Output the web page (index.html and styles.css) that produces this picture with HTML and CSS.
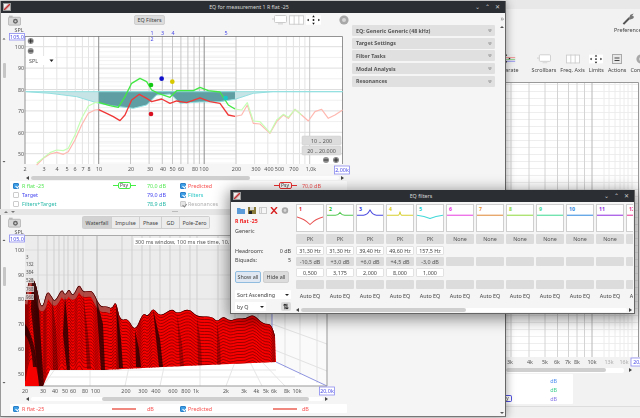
FILE: index.html
```html
<!DOCTYPE html>
<html>
<head>
  <title>EQ for measurement 1 R flat -25</title>
  <link rel="stylesheet" href="styles.css">
</head>
<body>
  <svg class="defs" width="0" height="0">
    <defs>
      <symbol id="camera" viewBox="0 0 14 11">
        <rect x="0.5" y="2" width="13" height="8.5" rx="1" fill="#d8d8d8" stroke="#999" stroke-width=".6"/>
        <rect x="1" y="0.3" width="4" height="2" fill="#bbb"/>
        <circle cx="8" cy="6.3" r="2.6" fill="#666"/>
        <circle cx="8" cy="6.3" r="1.2" fill="#ccc"/>
      </symbol>
      <symbol id="monitor" viewBox="0 0 15 10">
        <rect x="2.5" y="0.5" width="12" height="7" rx="1" fill="#fff" stroke="#ccc"/>
        <rect x="6" y="8" width="5" height="1.6" fill="#ddd"/>
        <path d="M0 4H2" stroke="#ccc"/>
      </symbol>
      <symbol id="bars" viewBox="0 0 16 10">
        <rect x="0.5" y="0.5" width="15" height="9" fill="#fff" stroke="#ccc"/>
        <path d="M5.5 0V10M10.5 0V10" stroke="#ccc"/>
      </symbol>
      <symbol id="limits" viewBox="0 0 16 10">
        <rect width="16" height="10" fill="#fff"/>
        <path d="M8 0L6.6 2H9.4ZM8 10L6.6 8H9.4ZM1 5L3 3.6V6.4ZM15 5L13 3.6V6.4Z" fill="#111"/>
        <circle cx="8" cy="5" r="1" fill="#111"/>
      </symbol>
      <symbol id="gear" viewBox="0 0 10 10">
        <circle cx="5" cy="5" r="4.6" fill="#a8a8a8"/>
        <circle cx="5" cy="5" r="2" fill="#d6d6d6"/>
      </symbol>
      <pattern id="dense-h" patternUnits="userSpaceOnUse" width="10" height="4.28">
        <path d="M0 .5H10" stroke="#ededed" stroke-width=".8"/>
      </pattern>
      <pattern id="back-h" patternUnits="userSpaceOnUse" width="10" height="7">
        <path d="M0 .5H10" stroke="#eeeeee" stroke-width="1"/>
      </pattern>
    </defs>
  </svg>

  <div class="win win-back">
    <div class="back-strip"></div>
    <div class="back-tool-top">
      <div class="back-pref">
        <svg class="wrench" viewBox="0 0 14 14"><path d="M1.5 12.5L8 6" stroke="#555" stroke-width="2.2"/><path d="M7 7L9 2.5L12.5 1L11 3.5L13 4.5L12 6.5L9 7.5Z" fill="#777"/></svg>
        <span>Preferences</span>
      </div>
    </div>
    <div class="back-tools">
      <div class="back-tool first"><svg class="back-icon sep" viewBox="0 0 18 11"><rect width="18" height="11" fill="#eee"/><path d="M0 4H18" stroke="#e88"/><path d="M0 6H18" stroke="#8c8"/><path d="M0 8H18" stroke="#88e"/><path d="M8 0L6.8 2H9.200ZM8 10L6.800 8H9.200ZM3 5L5 4V6ZM13 5L11 4V6Z" fill="#111"/></svg><span>Separate</span></div>
      <div class="back-tool"><svg class="back-icon"><use href="#monitor"/></svg><span>Scrollbars</span></div>
      <div class="back-tool"><svg class="back-icon"><use href="#bars"/></svg><span>Freq. Axis</span></div>
      <div class="back-tool"><svg class="back-icon"><use href="#limits"/></svg><span>Limits</span></div>
      <div class="back-tool"><svg class="back-icon" viewBox="0 0 10 10"><rect x=".5" y=".5" width="9" height="9" fill="#e8e8e8" stroke="#aaa"/><path d="M2.500 4H7.500M2.500 6.500H7.500" stroke="#444"/></svg><span>Actions</span></div>
      <div class="back-tool"><svg class="back-icon"><use href="#gear"/></svg><span>Controls</span></div>
    </div>
    <svg class="back-plot" viewBox="506 82 134 285" width="134" height="285">
      <rect x="506" y="82" width="132" height="275" fill="#fff"/>
      <rect x="506" y="82" width="132" height="275" fill="url(#back-h)"/>
      <path d="M511 82V357M529 82V357M545 82V357M557.500 82V357M568.500 82V357M577 82V357M584.500 82V357" stroke="#d4d4d4" stroke-width="1" fill="none"/>
      <path d="M592 82V357" stroke="#b8b8b8"/>
      <path d="M604 82V357M609 82V357M615 82V357M620 82V357M624 82V357M628 82V357M632 82V357" stroke="#ececec"/>
      <path d="M506 82.500H638.500V357" stroke="#999" fill="none"/>
      <text class="ax" x="510" y="364">3k</text><text class="ax" x="530" y="364">4k</text>
      <text class="ax" x="545" y="364">5k</text><text class="ax" x="557" y="364">6k</text>
      <text class="ax" x="568" y="364">7k</text><text class="ax" x="577" y="364">8k</text>
      <text class="ax" x="592" y="364">10k</text><text class="ax dim" x="609" y="364">13k</text>
      <text class="ax dim" x="624" y="364">16k</text>
      <rect class="limit-box" x="631" y="358" width="12" height="8"/>
      <text class="ax blue-ax" x="637" y="364">20,</text>
    </svg>
    <div class="back-scroll"><div class="back-scroll-thumb"></div><span class="back-arrow"></span></div>
    <div class="back-legend">
      <span class="db-blue">dB</span><span class="db-mint">dB</span><span class="db-violet">dB</span>
      <span class="back-psy">y</span>
    </div>
    <div class="back-foot"></div>
  </div>

  <div class="win win-main">
    <div class="titlebar">
      <span class="app-icon"></span>
      <span class="title-text main-title">EQ for measurement 1 R flat -25</span>
      <span class="wm-btn">&#8964;</span><span class="wm-btn">&#8963;</span><span class="wm-btn">&#10005;</span>
    </div>
    <div class="main-body">
      <div class="plots">
        <div class="toolbar top-toolbar">
          <svg class="cam"><use href="#camera"/></svg>
          <button class="btn eq-btn">EQ Filters</button>
          <svg class="tool-icon monitor"><use href="#monitor"/></svg>
          <svg class="tool-icon"><use href="#bars"/></svg>
          <svg class="tool-icon"><use href="#limits"/></svg>
          <svg class="tool-gear"><use href="#gear"/></svg>
        </div>

        <svg class="plot-svg" viewBox="0 27 350 148" width="350" height="148">
          <rect x="25" y="36" width="318" height="128" fill="#fff"/>
          <rect x="99" y="36" width="137" height="128" fill="url(#dense-h)"/>
          <path d="M25 57.400H343M25 78.800H343M25 100.200H343M25 121.600H343M25 143H343" stroke="#f0f0f0"/>
          <path d="M25 46.700H343M25 68.100H343M25 89.500H343M25 110.900H343M25 132.300H343M25 153.700H343" stroke="#dedede"/>
          <path d="M43.600 36V164M56.800 36V164M67 36V164M75.300 36V164M82.400 36V164M88.500 36V164M93.900 36V164M254.600 36V164M267.800 36V164M278 36V164M286.400 36V164M293.400 36V164M299.500 36V164M304.900 36V164" stroke="#e4e4e4"/>
          <path d="M130.500 36V164M149.100 36V164M162.300 36V164M172.500 36V164M180.900 36V164M187.900 36V164M194 36V164M199.400 36V164M236 36V164M309.700 36V164" stroke="#c8c8c8"/>
          <path d="M98.700 36V164M204.200 36V164" stroke="#8e8e8e"/>
          <path d="M25 164V36.500H342.500V164" stroke="#777" fill="none" stroke-width=".8"/>

          <g transform="scale(.3333)">
            <path class="eq-fill-out" d="M77 275L150 280L230 290L296 310V275ZM705 275V298L760 280L820 275Z"/>
            <path class="eq-fill-in" d="M296 273H705V298L660 305L600 306L540 310L520 290L510 282L470 285L440 315L400 325L340 318L296 310Z"/>
            <path class="eq-line" d="M77 275H1028"/>
            <path class="eq-line" d="M77 275L150 280L230 290L296 310L340 318L400 325L440 315L470 285L510 282L520 290L540 310L600 306L660 305L705 298L760 280L820 275L1028 275"/>
            <polyline class="curve pale-red" points="110,495 130,475 150,462 170,457 190,463 205,455 225,420 245,375 265,340 285,330 296,329"/>
            <polyline class="curve pale-red" points="705,349 725,345 742,315 760,370 780,372 810,400 830,365 850,345 865,355 885,328 905,345 925,363 945,335 965,328 985,355 1005,345 1028,330"/>
            <polyline class="curve pale-green" points="110,490 150,458 170,450 190,452 205,445 225,405 245,355 265,318 285,308 296,307"/>
            <polyline class="curve pale-green" points="705,327 725,330 742,308 760,363 780,365 810,398 830,360 850,343 865,352 885,328 905,345"/>
            <polyline class="curve bold-red" points="296,329 320,340 340,350 360,362 375,345 395,300 418,283 440,295 455,305 485,297 510,310 530,303 560,308 600,294 630,305 660,310 685,345 705,349"/>
            <polyline class="curve bold-green" points="296,307 330,317 355,322 375,290 395,250 420,235 440,245 455,270 475,280 510,292 530,272 560,272 580,272 600,262 625,272 660,276 685,315 705,327"/>
            <circle cx="453" cy="255" r="7" fill="#12c812"/>
            <circle cx="485" cy="236" r="7" fill="#1010cc"/>
            <circle cx="517" cy="245" r="7" fill="#d8c800"/>
            <circle cx="453" cy="342" r="7" fill="#d81020"/>
            <circle cx="677" cy="294" r="7" fill="#18c8c8"/>
          </g>

          <text class="ax" x="19" y="32">SPL</text>
          <rect class="limit-box" x="9.500" y="33.500" width="15" height="6.500"/>
          <text class="ax blue-ax" x="17" y="39">105,0</text>
          <text class="ax" x="19.500" y="49">100</text><text class="ax" x="21" y="70">90</text>
          <text class="ax" x="21" y="92">80</text><text class="ax" x="21" y="113">70</text>
          <text class="ax" x="21" y="135">60</text><text class="ax" x="21" y="156">50</text>

          <text class="ax blue-ax" x="152" y="35">1</text><text class="ax blue-ax" x="152" y="41">2</text>
          <text class="ax blue-ax" x="162.500" y="35">3</text><text class="ax blue-ax" x="173" y="35">4</text>
          <text class="ax blue-ax" x="226" y="35">5</text>

          <g class="zoom-icons">
            <circle cx="30.700" cy="41" r="3"/><path d="M28.500 41H33M30.700 38.800V43.200"/>
            <circle cx="30.700" cy="51" r="3"/><path d="M28.500 51H33"/>
            <circle cx="326" cy="160" r="3"/><path d="M323.800 160H328.200"/>
            <circle cx="336" cy="160" r="3"/><path d="M333.800 160H338.200M336 157.800V162.200"/>
          </g>
          <rect class="combo-rect" x="26" y="56" width="29" height="9" rx="1"/>
          <text class="ax left" x="29" y="62.500">SPL</text>
          <path d="M49.500 59.500H53.500L51.500 62Z" fill="#222"/>

          <rect class="range-btn" x="302" y="136" width="39" height="9" rx="1"/>
          <text class="ax" x="321.500" y="142.500">10 .. 200</text>
          <rect class="range-btn" x="302" y="146" width="39" height="9" rx="1"/>
          <text class="ax" x="321.500" y="152.500">20 .. 20.000</text>

          <path d="M2.500 39.500L4 38L5.500 39.500Z" fill="#555"/>
          <path d="M2.500 161L4 162.500L5.500 161Z" fill="#555"/>
          <rect x="3" y="63" width="3" height="15" rx="1" fill="#c6c6c6"/>

          <text class="ax" x="25" y="171">2</text><text class="ax" x="44" y="171">3</text>
          <text class="ax" x="57" y="171">4</text><text class="ax" x="67" y="171">5</text>
          <text class="ax" x="75" y="171">6</text><text class="ax" x="83" y="171">7</text>
          <text class="ax" x="89" y="171">8</text><text class="ax" x="99" y="171">10</text>
          <text class="ax" x="131" y="171">20</text><text class="ax" x="150" y="171">30</text>
          <text class="ax" x="163" y="171">40</text><text class="ax" x="172.500" y="171">50</text>
          <text class="ax" x="181" y="171">60</text><text class="ax" x="195" y="171">80</text>
          <text class="ax" x="204" y="171">100</text><text class="ax" x="236.500" y="171">200</text>
          <text class="ax" x="256" y="171">300</text><text class="ax" x="269" y="171">400</text>
          <text class="ax" x="279.500" y="171">500</text><text class="ax" x="294" y="171">700</text>
          <text class="ax" x="311" y="171">1,0k</text>
          <rect class="limit-box" x="334.500" y="166" width="15" height="8"/>
          <text class="ax blue-ax" x="342" y="172">2,00k</text>
        </svg>

        <div class="hscroll top-scroll"><span class="arrow-l"></span><div class="hscroll-track"><div class="hscroll-thumb thumb-a"></div></div><span class="arrow-r"></span></div>

        <div class="legend">
          <span class="check on"></span><span class="green">R flat -25</span><span class="psy psy-green">Psy</span><span class="green val">70,0 dB</span><span class="check on"></span><span class="red">Predicted</span><span class="psy psy-red">Psy</span><span class="red val">70,0 dB</span>
          <span class="check"></span><span class="blue">Target</span><span></span><span class="blue val">79,0 dB</span><span class="check on"></span><span class="cyan">Filters</span><span></span><span></span>
          <span class="check"></span><span class="teal">Filters+Target</span><span></span><span class="teal val">78,9 dB</span><span class="check off"></span><span class="grey">Resonances</span><span></span><span></span>
        </div>

        <div class="splitter"><span class="split-up"></span><span class="split-down"></span><span class="grip"></span></div>

        <div class="toolbar lower-toolbar">
          <svg class="cam"><use href="#camera"/></svg>
          <div class="segments">
            <span class="seg active">Waterfall</span><span class="seg">Impulse</span><span class="seg">Phase</span><span class="seg">GD</span><span class="seg">Pole-Zero</span>
          </div>
        </div>

        <svg class="plot-svg" viewBox="0 231 350 166" width="350" height="166">
          <rect x="25" y="236" width="302" height="151" fill="#fff"/>
          <rect x="25" y="236" width="247" height="127" fill="#ececec"/>
          <path d="M272 236L327 236V387L276 363Z" fill="#fafafa"/>
          <path d="M25 251H272M25 276H272M25 300H272M25 325H272M25 350H272" stroke="#dcdcdc"/>
          <path d="M38 236V363M47 236V363M54 236V363M59 236V363M64 236V363M68 236V363M74 236V363M78 236V363M83 236V363M122 236V363M132 236V363M142 236V363M150 236V363M160 236V363M170 236V363M180 236V363M190 236V363M197 236V363M218 236V363M235 236V363M248 236V363M258 236V363M266 236V363" stroke="#cfcfcf"/>
          <path d="M97 236V363" stroke="#b4b4b4"/>
          <path d="M285 236V369M300 236V376M317 236V384M272 300L327 315M272 325L327 345M272 350L327 372" stroke="#e2e2e2"/>
          <path d="M43 387L60 363M90 387L90 363M125 387L130 363M160 387L165 363M200 387L200 363M226 387L235 363M262 387L250 363M285 387L262 363M43 371H276M34 378H295" stroke="#e6e6e6" fill="none"/>
          <path d="M272 236V363M276 363L327 387" stroke="#8f95e0" fill="none"/>
          <path d="M25 387H327V236" stroke="#999" fill="none"/>
          <path d="M25 236.500H327" stroke="#aaa"/>

          <defs>
            <path id="ridge" d="M25 302Q28 283 30 280.500Q32 278 34 281.500Q36 285 38 295Q40 305 41.500 306.500Q43 308 45 299.500Q47 291 49.500 294.500Q52 298 53.500 300.500Q55 303 58.500 296Q62 289 63.500 293Q65 297 67 293Q69 289 71 293.500Q73 298 76 291Q79 284 81 288.500Q83 293 85.500 292.500Q88 292 90.500 292Q93 292 96.500 300Q100 308 103.500 307.500Q107 307 109.500 308.500Q112 310 114 305.500Q116 301 118 311.500Q120 322 124 320.500Q128 319 131.500 326Q135 333 139 323Q143 313 145.500 315.500Q148 318 150.500 313Q153 308 156.500 313Q160 318 166 313.500Q172 309 174.500 312Q177 315 183 312Q189 309 193 313.500Q197 318 204.500 317.500Q212 317 214.500 320Q217 323 220 320Q223 317 226.500 319.500Q230 322 233.500 320.500Q237 319 241 319.500Q245 320 249 317.500Q253 315 256.500 318.500Q260 322 262.500 323.500Q265 325 268.500 325Q272 325 275 337"/>
            <clipPath id="fall-clip">
              <path d="M25 302Q28 283 30 280.500Q32 278 34 281.500Q36 285 38 295Q40 305 41.500 306.500Q43 308 45 299.500Q47 291 49.500 294.500Q52 298 53.500 300.500Q55 303 58.500 296Q62 289 63.500 293Q65 297 67 293Q69 289 71 293.500Q73 298 76 291Q79 284 81 288.500Q83 293 85.500 292.500Q88 292 90.500 292Q93 292 96.500 300Q100 308 103.500 307.500Q107 307 109.500 308.500Q112 310 114 305.500Q116 301 118 311.500Q120 322 124 320.500Q128 319 131.500 326Q135 333 139 323Q143 313 145.500 315.500Q148 318 150.500 313Q153 308 156.500 313Q160 318 166 313.500Q172 309 174.500 312Q177 315 183 312Q189 309 193 313.500Q197 318 204.500 317.500Q212 317 214.500 320Q217 323 220 320Q223 317 226.500 319.500Q230 322 233.500 320.500Q237 319 241 319.500Q245 320 249 317.500Q253 315 256.500 318.500Q260 322 262.500 323.500Q265 325 268.500 325Q272 325 275 337L276 363L230 365L163 368L103 371L50 371L43 387H25Z"/>
            </clipPath>
            <clipPath id="band-clip"><rect x="25" y="270" width="85" height="60"/></clipPath>
          </defs>
          <g clip-path="url(#fall-clip)">
            <rect x="25" y="270" width="255" height="120" fill="#f60000"/>
            <g class="fall-lines">
              <use href="#ridge" y="3"/><use href="#ridge" y="6"/><use href="#ridge" y="9"/><use href="#ridge" y="12"/><use href="#ridge" y="15"/><use href="#ridge" y="18"/><use href="#ridge" y="21"/><use href="#ridge" y="24"/><use href="#ridge" y="27"/><use href="#ridge" y="30"/><use href="#ridge" y="33"/><use href="#ridge" y="36"/><use href="#ridge" y="39"/><use href="#ridge" y="42"/><use href="#ridge" y="45"/><use href="#ridge" y="48"/><use href="#ridge" y="51"/><use href="#ridge" y="54"/><use href="#ridge" y="57"/><use href="#ridge" y="60"/><use href="#ridge" y="63"/><use href="#ridge" y="66"/><use href="#ridge" y="69"/><use href="#ridge" y="72"/><use href="#ridge" y="76"/><use href="#ridge" y="80"/>
            </g>
            <g clip-path="url(#band-clip)">
              <use class="fall-band" href="#ridge" y="3"/>
            </g>
            <g class="fall-shade">
              <path d="M32 278L37 286L44 387H39L31 310Z"/>
              <path d="M25 325C31 332 36 350 37 368L33 368C32 352 29 340 25 336Z"/>
              <path d="M65 297L68 330L70 372H67L63 335Z"/>
              <path d="M52 298L56 330L58 372H53Z" opacity=".5"/>
              <path d="M83 293L88 335L91 370H87Z" opacity=".5"/>
              <path d="M96 298L103 325L105 371H101Z"/>
              <path d="M116 303L121 340L123 369H119Z"/>
              <path d="M135 331L139 350L141 368H136Z"/>
              <path d="M153 310L160 340L163 368H159Z"/>
              <path d="M177 315L182 345L184 368H180Z" opacity=".4"/>
              <path d="M197 318L201 345L202 367H198Z" opacity=".4"/>
              <path d="M217 323L220 345L221 367H217Z" opacity=".4"/>
            </g>
            <use class="fall-edge" href="#ridge"/>
          </g>

          <g class="time-labels">
            <rect x="25" y="255" width="3" height="6"/><rect x="25" y="262" width="9" height="6"/><rect x="25" y="270" width="9" height="6"/><rect x="25" y="278" width="9" height="6"/><rect x="25" y="287" width="9" height="6"/><rect x="25" y="295" width="9" height="6"/>
          </g>
          <text class="tiny" x="26" y="260">3</text><text class="tiny" x="26" y="267">132</text>
          <text class="tiny" x="26" y="275">384</text><text class="tiny" x="26" y="283">528</text>
          <text class="tiny" x="26" y="292">768</text><text class="tiny" x="26" y="300">960</text>

          <rect x="134" y="239" width="97" height="7" fill="#fff"/>
          <text class="ax left" x="135" y="244.500">300 ms window, 100 ms rise time, 10,1 ms</text>

          <text class="ax" x="19" y="234.500">SPL</text>
          <rect class="limit-box" x="9.500" y="236" width="15" height="7"/>
          <text class="ax blue-ax" x="17" y="241.500">105,0</text>
          <text class="ax" x="19.500" y="253">100</text><text class="ax" x="21" y="278">90</text>
          <text class="ax" x="21" y="302">80</text><text class="ax" x="21" y="327">70</text>
          <text class="ax" x="21" y="352">60</text><text class="ax" x="21" y="377">50</text>

          <path d="M2.500 242L4 240.500L5.500 242Z" fill="#555"/>
          <path d="M2.500 383L4 384.500L5.500 383Z" fill="#555"/>
          <rect x="3" y="268" width="3" height="19" rx="1" fill="#c6c6c6"/>

          <text class="ax" x="25" y="394">20</text><text class="ax" x="43" y="394">30</text>
          <text class="ax" x="55" y="394">40</text><text class="ax" x="65" y="394">50</text>
          <text class="ax" x="73" y="394">60</text><text class="ax" x="85" y="394">80</text>
          <text class="ax" x="95.500" y="394">100</text><text class="ax" x="126" y="394">200</text>
          <text class="ax" x="143" y="394">300</text><text class="ax" x="156" y="394">400</text>
          <text class="ax" x="173" y="394">600</text><text class="ax" x="186" y="394">800</text>
          <text class="ax" x="196" y="394">1k</text><text class="ax" x="226" y="394">2k</text>
          <text class="ax" x="244" y="394">3k</text><text class="ax" x="256.500" y="394">4k</text>
          <text class="ax" x="266" y="394">5k</text><text class="ax" x="274" y="394">6k</text>
          <text class="ax" x="287" y="394">8k</text><text class="ax" x="297" y="394">10k</text>
          <rect class="limit-box" x="319.500" y="388" width="15" height="8"/>
          <text class="ax blue-ax" x="327" y="394">20,0k</text>
        </svg>

        <div class="hscroll lower-scroll"><span class="arrow-l"></span><div class="hscroll-track"><div class="hscroll-thumb thumb-b"></div></div><span class="arrow-r"></span></div>

        <div class="legend lower-legend">
          <span class="check on"></span><span class="red">R flat -25</span><span class="swatch"></span><span class="red val">dB</span><span class="check on"></span><span class="red">Predicted</span><span class="swatch"></span><span class="red val">dB</span>
        </div>
      </div>

      <div class="side">
        <div class="side-top"><span class="side-collapse">&raquo;</span></div>
        <div class="side-sections">
          <div class="section"><span>EQ: Generic Generic (48 kHz)</span><span class="chev">&raquo;</span></div>
          <div class="section"><span>Target Settings</span><span class="chev">&raquo;</span></div>
          <div class="section"><span>Filter Tasks</span><span class="chev">&raquo;</span></div>
          <div class="section"><span>Modal Analysis</span><span class="chev">&raquo;</span></div>
          <div class="section"><span>Resonances</span><span class="chev">&raquo;</span></div>
        </div>
        <span class="side-up"></span>
        <span class="side-down"></span>
      </div>
    </div>
  </div>

  <div class="win win-filters">
    <div class="titlebar filters-title">
      <span class="app-icon"></span>
      <span class="title-text">EQ filters</span>
      <span class="wm-btn">&#8964;</span><span class="wm-btn">&#8963;</span><span class="wm-btn">&#10005;</span>
    </div>
    <div class="filters-body">
      <div class="filters-left">
        <div class="mini-tools">
          <svg class="mini" viewBox="0 0 8 7"><path d="M0 1H3L4 2H8V7H0Z" fill="#5b9bd8"/></svg>
          <svg class="mini" viewBox="0 0 8 7"><rect width="8" height="7" fill="#8a7a3a"/><rect x="2" width="4" height="3" fill="#ddd"/><rect y="4" x="1" width="3" height="3" fill="#222"/></svg>
          <svg class="mini" viewBox="0 0 8 7"><rect x=".5" y=".5" width="5" height="6" fill="#eee" stroke="#ccc"/><rect x="2.500" y=".5" width="5" height="6" fill="#f6f6f6" stroke="#ccc"/></svg>
          <svg class="mini" viewBox="0 0 8 7"><path d="M1 0L7 7M7 0L1 7" stroke="#d82020" stroke-width="1.400"/></svg>
          <svg class="mini"><use href="#gear"/></svg>
        </div>
        <div class="filter-name">R flat -25</div>
        <div class="filter-eq">Generic</div>
        <div class="stat stat-first"><span>Headroom:</span><span>0 dB</span></div>
        <div class="stat"><span>Biquads:</span><span>5</span></div>
        <div class="show-hide">
          <button class="btn show-btn">Show all</button>
          <button class="btn">Hide all</button>
        </div>
        <div class="combo sort-combo"><span>Sort Ascending</span></div>
        <div class="sort-row">
          <div class="combo by-combo"><span>by Q</span></div>
          <button class="btn sort-dir">&#8645;</button>
        </div>
      </div>
      <div class="filters-right">
        <div class="filter-cols">
          <div class="fcol">
            <div class="fbox" style="color:#e02020">1<svg viewBox="0 0 28 28"><path d="M0 13Q8 15 14 21Q20 15 28 13" stroke="#e85050"/></svg></div>
            <div class="cell grey">PK</div><div class="cell field">31,30 Hz</div><div class="cell grey">-10,5 dB</div><div class="cell field">0,500</div><div class="cell grey"></div><div class="cell auto">Auto EQ</div>
          </div>
          <div class="fcol">
            <div class="fbox" style="color:#20c020">2<svg viewBox="0 0 28 28"><path d="M0 11H9Q12 11 14 8Q16 11 19 11H28" stroke="#50c850"/></svg></div>
            <div class="cell grey">PK</div><div class="cell field">31,30 Hz</div><div class="cell grey">+3,0 dB</div><div class="cell field">3,175</div><div class="cell grey"></div><div class="cell auto">Auto EQ</div>
          </div>
          <div class="fcol">
            <div class="fbox" style="color:#3030e0">3<svg viewBox="0 0 28 28"><path d="M0 11H7Q11 11 14 5.500Q17 11 21 11H28" stroke="#4848e0"/></svg></div>
            <div class="cell grey">PK</div><div class="cell field">39,40 Hz</div><div class="cell grey">+6,0 dB</div><div class="cell field">2,000</div><div class="cell grey"></div><div class="cell auto">Auto EQ</div>
          </div>
          <div class="fcol">
            <div class="fbox" style="color:#d8c800">4<svg viewBox="0 0 28 28"><path d="M0 11H12Q13.500 11 14 7Q14.500 11 16 11H28" stroke="#d8d030"/></svg></div>
            <div class="cell grey">PK</div><div class="cell field">49,60 Hz</div><div class="cell grey">+4,5 dB</div><div class="cell field">8,000</div><div class="cell grey"></div><div class="cell auto">Auto EQ</div>
          </div>
          <div class="fcol">
            <div class="fbox" style="color:#20d0d0">5<svg viewBox="0 0 28 28"><path d="M0 11Q8 12 14 14.500Q20 12 28 11" stroke="#40d8d8"/></svg></div>
            <div class="cell grey">PK</div><div class="cell field">157,5 Hz</div><div class="cell grey">-3,0 dB</div><div class="cell field">1,000</div><div class="cell grey"></div><div class="cell auto">Auto EQ</div>
          </div>
          <div class="fcol">
            <div class="fbox" style="color:#e830e0">6<svg viewBox="0 0 28 28"><path d="M0 11H28" stroke="#e840e0"/></svg></div>
            <div class="cell grey">None</div><div class="cell blank"></div><div class="cell grey"></div><div class="cell blank"></div><div class="cell grey"></div><div class="cell auto">Auto EQ</div>
          </div>
          <div class="fcol">
            <div class="fbox" style="color:#e89030">7<svg viewBox="0 0 28 28"><path d="M0 11H28" stroke="#e08838"/></svg></div>
            <div class="cell grey">None</div><div class="cell blank"></div><div class="cell grey"></div><div class="cell blank"></div><div class="cell grey"></div><div class="cell auto">Auto EQ</div>
          </div>
          <div class="fcol">
            <div class="fbox" style="color:#90d840">8<svg viewBox="0 0 28 28"><path d="M0 11H28" stroke="#90d840"/></svg></div>
            <div class="cell grey">None</div><div class="cell blank"></div><div class="cell grey"></div><div class="cell blank"></div><div class="cell grey"></div><div class="cell auto">Auto EQ</div>
          </div>
          <div class="fcol">
            <div class="fbox" style="color:#40d890">9<svg viewBox="0 0 28 28"><path d="M0 11H28" stroke="#40d890"/></svg></div>
            <div class="cell grey">None</div><div class="cell blank"></div><div class="cell grey"></div><div class="cell blank"></div><div class="cell grey"></div><div class="cell auto">Auto EQ</div>
          </div>
          <div class="fcol">
            <div class="fbox" style="color:#3088e0">10<svg viewBox="0 0 28 28"><path d="M0 11H28" stroke="#3088e0"/></svg></div>
            <div class="cell grey">None</div><div class="cell blank"></div><div class="cell grey"></div><div class="cell blank"></div><div class="cell grey"></div><div class="cell auto">Auto EQ</div>
          </div>
          <div class="fcol">
            <div class="fbox" style="color:#9030e0">11<svg viewBox="0 0 28 28"><path d="M0 11H28" stroke="#9030e0"/></svg></div>
            <div class="cell grey">None</div><div class="cell blank"></div><div class="cell grey"></div><div class="cell blank"></div><div class="cell grey"></div><div class="cell auto">Auto EQ</div>
          </div>
          <div class="fcol">
            <div class="fbox" style="color:#e83090">12<svg viewBox="0 0 28 28"><path d="M0 11H28" stroke="#e83090"/></svg></div>
            <div class="cell grey">None</div><div class="cell blank"></div><div class="cell grey"></div><div class="cell blank"></div><div class="cell grey"></div><div class="cell auto">Auto EQ</div>
          </div>
        </div>
        <div class="fscroll"><span class="arrow-l"></span><div class="fscroll-track"><div class="fscroll-thumb"></div></div><span class="arrow-r"></span></div>
      </div>
    </div>
  </div>
</body>
</html>
```

FILE: styles.css
```css
* {
  box-sizing: border-box;
}

html,
body {
  margin: 0;
  height: 100%;
  overflow: hidden;
}

body {
  position: relative;
  width: 640px;
  height: 418px;
  background: #f0f0f0;
  font-family: "Noto Sans", "Liberation Sans", sans-serif;
  font-size: 5.4px;
  color: #444;
}

.defs {
  position: absolute;
}

.win {
  position: absolute;
  overflow: hidden;
  filter: blur(0.35px);
}

/* windows */
.win-back {
  left: 506px;
  top: 0;
  width: 134px;
  height: 418px;
  background: #f2f2f2;
}

.win-main {
  left: 0;
  top: 1px;
  width: 506px;
  height: 416px;
  background: #f5f5f5;
  border-right: 1px solid #666;
  border-bottom: 1px solid #777;
  border-left: 1px solid #999;
  box-shadow: 0 0 9px rgba(0, 0, 0, 0.4);
  overflow: visible;
}

.win-filters {
  left: 230px;
  top: 190px;
  width: 405px;
  height: 124px;
  background: #f5f5f5;
  border: 1px solid #666;
  border-top: 0;
  box-shadow: 0 3px 14px 2px rgba(0, 0, 0, 0.45);
  overflow: visible;
}

.titlebar {
  display: flex;
  align-items: center;
  height: 12px;
  padding: 0 3px 0 2px;
  background: #2b2f33;
  color: #d8d8d8;
}

.title-text {
  flex: 1;
  text-align: center;
  font-size: 5.3px;
}

.main-title {
  padding-left: 15px;
}

.filters-title {
  height: 12px;
}

.app-icon {
  width: 8px;
  height: 8px;
  background: linear-gradient(135deg, #f0f0f0 30%, #c03030 50%, #ddd 70%);
  border: 1px solid #999;
}

.wm-btn {
  width: 10px;
  text-align: center;
  font-size: 6px;
  line-height: 10px;
  color: #ccc;
}

.main-body {
  display: flex;
}

.plots {
  width: 350px;
  margin-left: -1px;
}

.plot-svg {
  display: block;
}

/* svg text */
.ax {
  font-size: 5.4px;
  fill: #555;
  text-anchor: middle;
}

.ax.left {
  text-anchor: start;
}

.ax.dim {
  fill: #aaa;
}

.blue-ax {
  fill: #4a4ae8;
}

.tiny {
  font-size: 4.4px;
  fill: #555;
}

.limit-box {
  fill: #fff;
  stroke: #8c8cf0;
  stroke-width: 0.8;
}

.combo-rect {
  fill: #fff;
}

.range-btn {
  fill: #dcdcdc;
  stroke: #cfcfcf;
  stroke-width: 0.5;
}

.zoom-icons circle {
  fill: #909090;
}

.zoom-icons path {
  stroke: #222;
  stroke-width: 0.8;
  fill: none;
}

/* response plot */
.eq-fill-out {
  fill: #c6e4e5;
}

.eq-fill-in {
  fill: #5f9fa3;
}

.eq-line {
  fill: none;
  stroke: #93dfe0;
  stroke-width: 3;
}

.curve {
  fill: none;
  stroke-linejoin: round;
}

.pale-red {
  stroke: #ffb8b0;
  stroke-width: 3.5;
}

.pale-green {
  stroke: #c4ffb4;
  stroke-width: 3.5;
}

.bold-red {
  stroke: #f03838;
  stroke-width: 4;
}

.bold-green {
  stroke: #44e844;
  stroke-width: 4;
}

/* waterfall */
.fall-lines use {
  fill: none;
  stroke: #800000;
  stroke-width: 0.75;
}

.fall-band {
  fill: none;
  stroke: #b04a44;
  stroke-width: 5;
}

.fall-shade path {
  fill: #1c0000;
  fill-opacity: 0.75;
}

.fall-edge {
  fill: none;
  stroke: #2a0000;
  stroke-width: 1.2;
}

.time-labels rect {
  fill: #e8e8e8;
  opacity: 0.8;
}

/* toolbars */
.toolbar {
  display: flex;
  align-items: center;
}

.top-toolbar {
  height: 14px;
  padding-left: 8px;
}

.lower-toolbar {
  height: 15px;
  padding-left: 8px;
}

.cam {
  width: 13px;
  height: 11px;
}

.btn {
  padding: 0;
  font-family: inherit;
  font-size: 5.4px;
  color: #444;
  background: #dcdcdc;
  border: 1px solid #cfcfcf;
  border-radius: 2px;
}

.eq-btn {
  width: 31px;
  height: 10px;
  margin-left: 113px;
}

.tool-icon {
  width: 15px;
  height: 10px;
  margin-left: 2px;
}

.tool-icon.monitor {
  margin-left: 107px;
}

.tool-gear {
  width: 10px;
  height: 10px;
  margin-left: 18px;
}

.segments {
  display: flex;
  height: 13px;
  margin-left: 61px;
  padding: 1px;
  background: #cfcfcf;
  border-radius: 2px;
}

.seg {
  display: flex;
  align-items: center;
  justify-content: center;
  margin-right: 1px;
  background: #ececec;
  font-size: 5.4px;
}

.seg:nth-child(1) {
  width: 28px;
}

.seg:nth-child(2) {
  width: 27px;
}

.seg:nth-child(3) {
  width: 21px;
}

.seg:nth-child(4) {
  width: 17px;
}

.seg:nth-child(5) {
  width: 29px;
  margin-right: 0;
}

.seg.active {
  background: #d2d2d2;
}

/* scrollbars */
.hscroll,
.fscroll {
  display: flex;
  align-items: center;
  height: 6px;
}

.top-scroll,
.lower-scroll {
  padding-left: 26px;
  width: 344px;
}

.lower-scroll {
  width: 328px;
}

.hscroll-track {
  flex: 1;
  height: 4px;
  margin: 0 2px;
  background: #fff;
  border-radius: 2px;
}

.hscroll-thumb {
  height: 4px;
  background: #cfcfcf;
  border-radius: 2px;
}

.thumb-a {
  width: 219px;
}

.thumb-b {
  width: 207px;
  margin-left: 71px;
}

.arrow-l,
.arrow-r {
  width: 0;
  height: 0;
  border-top: 2px solid transparent;
  border-bottom: 2px solid transparent;
}

.arrow-l {
  border-right: 3px solid #444;
}

.arrow-r {
  border-left: 3px solid #444;
}

/* legends */
.legend {
  display: grid;
  grid-template-columns: 9px 80px 44px 34px 8px 81px 32px 40px;
  grid-auto-rows: 9.3px;
  align-items: center;
  width: 337px;
  height: 28px;
  margin-left: 10px;
  padding-left: 3px;
  background: #fff;
  border-radius: 1px;
}

.lower-legend {
  height: 9px;
  margin-top: 2px;
}

.check {
  width: 6px;
  height: 6px;
  background: #fff;
  border: 0.6px solid #ccc;
  border-radius: 1px;
  position: relative;
}

.check.on {
  background: #3d9ee6;
  border-color: #2a80c8;
}

.check.off {
  background: #e6e6e6;
}

.check.on::after,
.check.off::after {
  content: "";
  position: absolute;
  left: 1.6px;
  top: 0.3px;
  width: 2px;
  height: 3.4px;
  border-right: 0.8px solid #fff;
  border-bottom: 0.8px solid #fff;
  transform: rotate(40deg);
}

.check.off::after {
  border-color: #888;
}

.green {
  color: #58e858;
}

.red {
  color: #f85050;
}

.blue {
  color: #4848f0;
}

.cyan {
  color: #30c8c8;
}

.teal {
  color: #28b8a8;
}

.grey {
  color: #b0b0b0;
}

.val {
  padding-left: 1px;
}

.psy {
  position: relative;
  justify-self: center;
  width: 13px;
  height: 7px;
  line-height: 5.6px;
  text-align: center;
  font-size: 5px;
  color: #444;
  background: #fff;
  border: 1px solid;
  border-radius: 2px;
}

.psy-green {
  border-color: #44ee44;
}

.psy-red {
  border-color: #f03030;
}

.psy::before,
.psy::after {
  content: "";
  position: absolute;
  top: 1.5px;
  width: 5px;
  height: 1px;
}

.psy-green::before,
.psy-green::after {
  background: #44ee44;
}

.psy-red::before,
.psy-red::after {
  background: #f03030;
}

.psy::before {
  left: -6px;
}

.psy::after {
  right: -6px;
}

.swatch {
  justify-self: center;
  width: 24px;
  height: 2px;
  background: #f08880;
}

.splitter {
  position: relative;
  display: flex;
  justify-content: center;
  height: 6px;
  background: #e6e6e6;
}

.split-up,
.split-down {
  position: absolute;
  top: 2px;
  border-left: 2px solid transparent;
  border-right: 2px solid transparent;
}

.split-up {
  left: 4px;
  border-bottom: 2px solid #777;
}

.split-down {
  left: 11px;
  border-top: 2px solid #777;
}

.grip {
  width: 6px;
  height: 1px;
  margin-top: 2px;
  background: #bbb;
}

/* side panel */
.side {
  position: relative;
  flex: 1;
}

.side-top {
  height: 12px;
  text-align: right;
  padding-right: 1px;
  font-size: 7px;
  line-height: 12px;
  color: #888;
}

.side-sections {
  display: flex;
  flex-direction: column;
  gap: 1.7px;
  width: 143px;
  margin-left: 2px;
}

.section {
  display: flex;
  justify-content: space-between;
  align-items: center;
  height: 11px;
  padding: 0 3px 0 4px;
  background: #e0e0e0;
  border-radius: 1px;
  font-weight: 700;
  font-size: 5.3px;
  color: #555;
}

.chev {
  font-weight: 400;
  color: #777;
  font-size: 6.5px;
  transform: rotate(90deg);
}

.side-up,
.side-down {
  position: absolute;
  left: 150px;
  width: 0;
  height: 0;
  border-left: 2px solid transparent;
  border-right: 2px solid transparent;
}

.side-up {
  top: 13px;
  border-bottom: 2px solid #555;
}

.side-down {
  top: 399px;
  border-top: 2px solid #555;
}

/* filters window */
.filters-body {
  display: flex;
  height: 112px;
}

.filters-left {
  width: 65px;
  padding: 4px 5px 0 4px;
}

.mini-tools {
  display: flex;
  justify-content: space-between;
  align-items: center;
  height: 8px;
  padding: 0 2px;
}

.mini {
  width: 8px;
  height: 7px;
}

.filter-name {
  margin-top: 3px;
  color: #f02020;
  font-weight: 700;
  font-size: 5.2px;
}

.filter-eq {
  margin-top: 2px;
  line-height: 8px;
}

.stat {
  display: flex;
  justify-content: space-between;
  height: 9px;
  line-height: 9px;
}

.stat-first {
  margin-top: 12px;
}

.show-hide {
  display: flex;
  gap: 2px;
  margin-top: 6px;
}

.show-hide .btn {
  width: 26px;
  height: 12px;
}

.show-btn {
  background: #dfe8f2;
  border-color: #90bce0;
}

.combo {
  position: relative;
  display: flex;
  align-items: center;
  height: 9px;
  padding-left: 2px;
  background: #fff;
  border-radius: 1px;
}

.combo::after {
  content: "";
  position: absolute;
  right: 2px;
  top: 3.5px;
  border-left: 2px solid transparent;
  border-right: 2px solid transparent;
  border-top: 2.5px solid #222;
}

.sort-combo {
  margin-top: 7px;
}

.sort-row {
  display: flex;
  justify-content: space-between;
  margin-top: 3px;
}

.by-combo {
  width: 31px;
}

.sort-dir {
  width: 10px;
  height: 9px;
  font-size: 7px;
  line-height: 7px;
  font-weight: 700;
  color: #222;
  border: 0;
}

.filters-right {
  width: 338px;
  padding-top: 2px;
  overflow: hidden;
}

.filter-cols {
  display: grid;
  grid-template-columns: repeat(12, 28px);
  gap: 2px;
  width: 337px;
  overflow: hidden;
}

.fcol {
  display: flex;
  flex-direction: column;
  gap: 2px;
}

.fbox {
  position: relative;
  height: 28px;
  padding-left: 2px;
  background: #fff;
  border: 1px solid #cfcfcf;
  font-size: 5.2px;
  font-weight: 700;
  line-height: 8px;
}

.fbox svg {
  position: absolute;
  left: 0;
  top: 0;
  width: 26px;
  height: 26px;
  fill: none;
  stroke-width: 1.1;
}

.cell {
  display: flex;
  align-items: center;
  justify-content: center;
  height: 9px;
  border-radius: 1px;
}

.cell.grey {
  color: #555;
  background: #dcdcdc;
}

.cell.field {
  background: #fff;
  border: 0.6px solid #e2e2e2;
}

.cell:nth-child(2) {
  height: 10px;
}

.cell:nth-child(6) {
  margin-top: 1px;
}

.cell.auto {
  height: 10px;
  background: none;
}

.fscroll {
  width: 336px;
  margin-top: 6px;
}

.fscroll-track {
  flex: 1;
  height: 4px;
  margin: 0 2px;
  background: #fff;
  border-radius: 2px;
}

.fscroll-thumb {
  width: 165px;
  height: 4px;
  background: #cfcfcf;
  border-radius: 2px;
}

/* window behind */
.back-strip {
  height: 9px;
  background: #e8e8e8;
}

.back-tool-top {
  height: 35px;
  padding-top: 3px;
}

.back-pref {
  display: flex;
  flex-direction: column;
  align-items: flex-start;
  margin-left: 108px;
  white-space: nowrap;
}

.wrench {
  width: 13px;
  height: 14px;
  margin-left: 8px;
}

.back-tools {
  display: flex;
  gap: 4px;
  height: 38px;
  margin-left: -10px;
  white-space: nowrap;
}

.back-tool {
  display: flex;
  flex-direction: column;
  align-items: center;
  gap: 2px;
  padding-top: 10px;
}

.back-tool.first {
  margin-right: 9px;
}

.back-icon {
  width: 14px;
  height: 10px;
}

.back-icon.sep {
  width: 18px;
}

.back-plot {
  display: block;
}

.back-scroll {
  position: relative;
  height: 5px;
  margin-top: 1px;
  width: 118px;
  background: #fff;
  border-radius: 2px;
}

.back-scroll-thumb {
  width: 100px;
  height: 4px;
  background: #cfcfcf;
  border-radius: 2px;
}

.back-arrow {
  position: absolute;
  right: -8px;
  top: 0;
  border-top: 2px solid transparent;
  border-bottom: 2px solid transparent;
  border-left: 3px solid #444;
}

.back-legend {
  position: relative;
  display: flex;
  flex-direction: column;
  align-items: flex-end;
  width: 67px;
  height: 30px;
  margin-top: 1px;
  padding: 3px 16px 0 0;
  background: #fff;
  line-height: 9px;
  border-radius: 1px;
}

.db-blue {
  color: #5090f0;
}

.db-mint {
  color: #40d090;
}

.db-violet {
  color: #8878e8;
}

.back-psy {
  position: absolute;
  left: 0;
  top: 21px;
  width: 6px;
  height: 7px;
  line-height: 5.6px;
  color: #555;
  border: 1px solid #5050e0;
  border-left: 0;
  border-radius: 0 2px 2px 0;
}

.back-foot {
  height: 11px;
  margin-top: 2px;
  background: #f0f0f0;
  border-top: 1px solid #ddd;
}
```
